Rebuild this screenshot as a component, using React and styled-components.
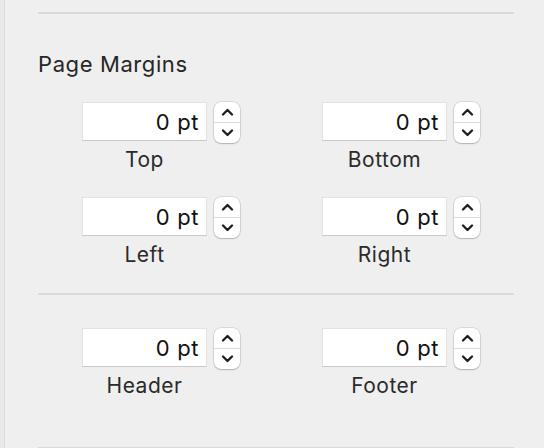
import React from "react";
import styled, { createGlobalStyle } from "styled-components";

const GlobalStyle = createGlobalStyle`
  html, body {
    margin: 0;
    padding: 0;
    background: #efefef;
  }
  body {
    font-family: Inter, "Liberation Sans", sans-serif;
    -webkit-font-smoothing: antialiased;
  }
`;

const Panel = styled.div`
  display: flex;
  width: 544px;
  height: 448px;
  overflow: hidden;
  background: #efefef;
`;

const Edge = styled.div`
  width: 4px;
  flex-shrink: 0;
  background: #e9e9e9;
  border-right: 1px solid #dddddd;
`;

const Content = styled.div`
  flex: 1;
  display: flex;
  flex-direction: column;
  padding: 0 30px 0 33px;
`;

const Separator = styled.div`
  height: 2px;
  background: #d9d9d9;
  margin-top: ${(p) => p.$top}px;
  flex-shrink: 0;
`;

const Title = styled.h2`
  margin: 36px 0 0;
  font-size: 22px;
  line-height: 28px;
  letter-spacing: 0.6px;
  font-weight: 400;
  color: #262626;
`;

const Grid = styled.div`
  display: grid;
  grid-template-columns: 158px 158px;
  column-gap: 82px;
  row-gap: 25px;
  margin-top: ${(p) => p.$top}px;
  padding-left: 44px;
`;

const Field = styled.div`
  display: flex;
  flex-direction: column;
`;

const Controls = styled.div`
  display: flex;
  align-items: flex-start;
  gap: 7px;
`;

const Input = styled.div`
  box-sizing: border-box;
  width: 125px;
  height: 39px;
  background: #ffffff;
  border: 1px solid #e2e2e2;
  border-bottom-color: #c9c9c9;
  font-size: 22px;
  line-height: 39px;
  letter-spacing: 0.6px;
  text-align: right;
  padding-right: 7px;
  color: #111111;
`;

const Stepper = styled.div`
  box-sizing: border-box;
  width: 26px;
  height: 41px;
  background: #ffffff;
  border-radius: 7px;
  box-shadow: 0 0 0 0.5px rgba(0, 0, 0, 0.18), 0 1px 1.5px rgba(0, 0, 0, 0.18);
  display: flex;
  flex-direction: column;
`;

const StepHalf = styled.div`
  flex: 1;
  display: flex;
  align-items: center;
  justify-content: center;
  border-top: ${(p) => (p.$lower ? "1px solid #dcdcdc" : "none")};
`;

const Label = styled.div`
  width: 125px;
  margin-top: 5px;
  text-align: center;
  font-size: 21px;
  line-height: 24px;
  letter-spacing: 0.5px;
  color: #2a2a2a;
`;

const Chevron = ({ up }) => (
  <svg width="13" height="8" viewBox="0 0 13 8">
    <path
      d={up ? "M2 6.5 L6.5 2 L11 6.5" : "M2 1.5 L6.5 6 L11 1.5"}
      fill="none"
      stroke="#1e1e1e"
      strokeWidth="2.3"
      strokeLinecap="round"
      strokeLinejoin="round"
    />
  </svg>
);

const MarginField = ({ label, value }) => (
  <Field>
    <Controls>
      <Input>{value}</Input>
      <Stepper>
        <StepHalf>
          <Chevron up />
        </StepHalf>
        <StepHalf $lower>
          <Chevron />
        </StepHalf>
      </Stepper>
    </Controls>
    <Label>{label}</Label>
  </Field>
);

export default function App() {
  return (
    <>
      <GlobalStyle />
      <Panel>
        <Edge />
        <Content>
          <Separator $top={12} />
          <Title>Page Margins</Title>
          <Grid $top={24}>
            <MarginField label="Top" value="0 pt" />
            <MarginField label="Bottom" value="0 pt" />
            <MarginField label="Left" value="0 pt" />
            <MarginField label="Right" value="0 pt" />
          </Grid>
          <Separator $top={26} />
          <Grid $top={33}>
            <MarginField label="Header" value="0 pt" />
            <MarginField label="Footer" value="0 pt" />
          </Grid>
          <Separator $top={49} />
        </Content>
      </Panel>
    </>
  );
}
